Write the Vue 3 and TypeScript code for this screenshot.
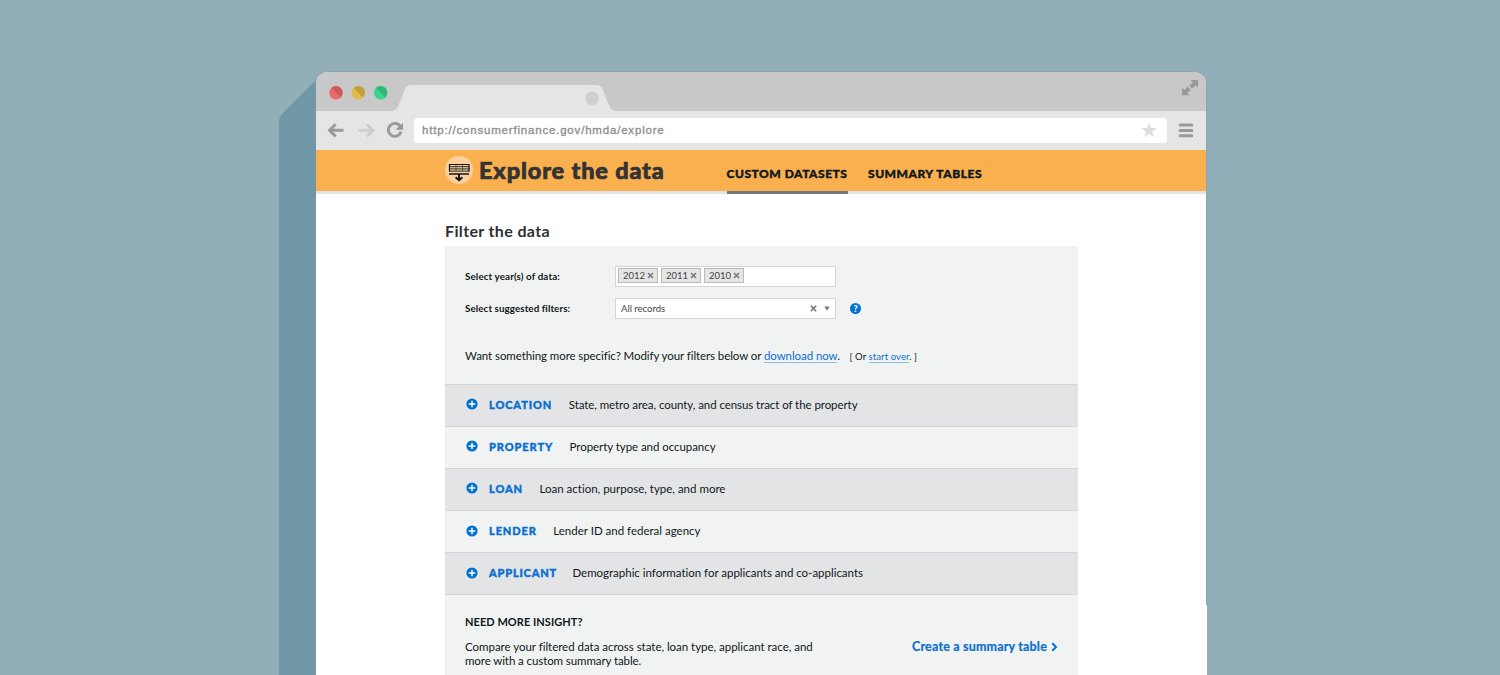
<script setup lang="ts">
interface FilterGroup {
  key: string
  name: string
  description: string
}

const years: number[] = [2012, 2011, 2010]

const groups: FilterGroup[] = [
  { key: 'location', name: 'LOCATION', description: 'State, metro area, county, and census tract of the property' },
  { key: 'property', name: 'PROPERTY', description: 'Property type and occupancy' },
  { key: 'loan', name: 'LOAN', description: 'Loan action, purpose, type, and more' },
  { key: 'lender', name: 'LENDER', description: 'Lender ID and federal agency' },
  { key: 'applicant', name: 'APPLICANT', description: 'Demographic information for applicants and co-applicants' },
]
</script>

<template>
  <main class="stage">
    <svg class="side" width="38" height="603" viewBox="0 0 38 603">
      <path d="M38 7 L3 42 Q0 45 0 50 V603 H38 Z" fill="#7097a5" />
    </svg>
    <div class="window">
      <div class="tabstrip">
        <svg width="890" height="39" viewBox="0 0 890 39">
          <path d="M76 39 C80 38 81.500 36 83 32 L89 17 C90.500 13.500 92 13 96 13 H280 C283.500 13 285 14 286.500 17 L292.500 32 C294 36 295.500 38 299 39 Z" fill="#e5e5e5" />
          <circle cx="20" cy="20.700" r="6.700" fill="#e96a68" />
          <path d="M15.260 15.960 A6.700 6.700 0 0 1 24.740 25.440 Z" fill="#ca5c5b" />
          <circle cx="42.300" cy="20.700" r="6.700" fill="#e0ba45" />
          <path d="M37.560 15.960 A6.700 6.700 0 0 1 47.040 25.440 Z" fill="#c1a13d" />
          <circle cx="64.600" cy="20.700" r="6.700" fill="#36d68b" />
          <path d="M59.860 15.960 A6.700 6.700 0 0 1 69.340 25.440 Z" fill="#30b878" />
          <circle cx="276" cy="26.300" r="6.700" fill="#cfcfcf" />
          <g fill="#999">
            <path d="M874.500 8 H882 V15.500 L879.700 13.200 L876.200 16.700 L873.200 13.700 L876.800 10.200 Z" />
            <path d="M866 15.700 L868.400 18 L871.700 14.600 L874.800 17.700 L871.300 21 L873.700 23.200 H866 Z" />
          </g>
        </svg>
      </div>
      <div class="toolbar">
        <svg class="nav" width="98" height="39" viewBox="0 0 98 39" fill="none">
          <path d="M27.500 19.300 H14 M19.700 13.200 L13.500 19.300 L19.700 25.400" stroke="#999" stroke-width="2.900" />
          <path d="M42.500 19.300 H56 M50.800 13.200 L57 19.300 L50.800 25.400" stroke="#cdcdcd" stroke-width="2.900" />
          <path d="M84.300 15.300 A6.500 6.500 0 1 0 85.100 20.700" stroke="#999" stroke-width="2.900" />
          <path d="M87 11.700 V18.800 H79.500 Z" fill="#999" />
        </svg>
        <div class="address">
          <span class="url">http://consumerfinance.gov/hmda/explore</span>
          <svg width="18" height="18" viewBox="0 0 18 18">
            <path d="M9 1.200 L10.900 6.900 H17 L12.100 10.500 L13.900 16.300 L9 12.800 L4.100 16.300 L5.900 10.500 L1 6.900 H7.100 Z" fill="#dedede" />
          </svg>
        </div>
        <svg class="burger" width="16" height="16" viewBox="0 0 16 16">
          <path d="M2.200 2 H13.800 M2.200 7.400 H13.800 M2.200 12.700 H13.800" stroke="#999" stroke-width="3" stroke-linecap="round" />
        </svg>
      </div>

      <header class="banner">
        <svg class="logo" width="28" height="28" viewBox="0 0 28 28">
          <circle cx="14" cy="14" r="14" fill="#fdcf9b" />
          <path d="M4 8.500 H24.500 M4.500 8 V15.500 M24 8 V15.500" stroke="#101820" stroke-width="1.200" fill="none" />
          <path d="M4 10.700 H24.500 M4 12.900 H24.500 M4 15.100 H24.500" stroke="#101820" stroke-width=".9" />
          <path d="M11 8 V15 M17.500 8 V15" stroke="#101820" stroke-width=".5" />
          <path d="M4 18 H24" stroke="#101820" stroke-width="1.500" />
          <path d="M14 18 V24 M10.600 21.200 L14 24.200 L17.400 21.200" stroke="#101820" stroke-width="2" fill="none" />
        </svg>
        <h1 class="title">Explore the data</h1>
        <nav class="menu">
          <a class="tab active">CUSTOM DATASETS</a>
          <a class="tab second">SUMMARY TABLES</a>
        </nav>
      </header>

      <section class="content">
        <h2 class="heading">Filter the data</h2>
        <div class="panel">
          <div class="form">
            <div class="field">
              <span class="label years">Select year(s) of data:</span>
              <div class="input chips">
                <span v-for="year in years" :key="year" class="chip">
                  {{ year }}
                  <svg width="7" height="7" viewBox="0 0 7 7"><path d="M1 1 L6 6 M6 1 L1 6" stroke="#7b7b7b" stroke-width="1.700" /></svg>
                </span>
              </div>
            </div>
            <div class="field">
              <span class="label suggested">Select suggested filters:</span>
              <div class="input select">
                <span class="value">All records</span>
                <svg width="7" height="7" viewBox="0 0 7 7"><path d="M.8 .8 L6.200 6.200 M6.200 .8 L.8 6.200" stroke="#777" stroke-width="1.600" /></svg>
                <svg class="caret" width="6" height="5" viewBox="0 0 6 5"><path d="M.3 .5 H5.700 L3 4.700 Z" fill="#777" /></svg>
              </div>
              <span class="help">?</span>
            </div>
            <p class="more">
              <span class="lead">Want something more specific? Modify your filters below or <a class="link">download now</a>.</span>
              <span class="or">[ Or <a class="link">start over</a>. ]</span>
            </p>
          </div>

          <div v-for="group in groups" :key="group.key" class="group">
            <svg class="plus" width="12" height="12" viewBox="0 0 12 12">
              <circle cx="6" cy="6" r="5.600" fill="#0071ce" />
              <path d="M6 2.700 V9.300 M2.700 6 H9.300" stroke="#fff" stroke-width="1.500" />
            </svg>
            <span class="name" :class="group.key">{{ group.name }}</span>
            <span class="desc" :class="group.key">{{ group.description }}</span>
          </div>

          <div class="insight">
            <div class="pitch">
              <h3>NEED MORE INSIGHT?</h3>
              <p class="first">Compare your filtered data across state, loan type, applicant race, and</p>
              <p class="last">more with a custom summary table.</p>
            </div>
            <a class="create">
              <span>Create a summary table</span>
              <svg width="7" height="10" viewBox="0 0 7 10"><path d="M1.300 1.200 L5 5 L1.300 8.800" stroke="#0a6fd0" stroke-width="2" fill="none" /></svg>
            </a>
          </div>
        </div>
      </section>
    </div>
    <div class="edge"></div>
  </main>
</template>

<style>
html,
body {
  margin: 0;
  overflow: hidden;
}
</style>

<style scoped>
.stage {
  width: 1500px;
  height: 675px;
  box-sizing: border-box;
  padding: 72px 0 0 278.500px;
  display: flex;
  overflow: hidden;
  background: #92afb9;
  font-family: Lato, 'Liberation Sans', sans-serif;
  font-variant-ligatures: none;
  color: #101820;
  white-space: nowrap;
}
.side {
  flex: none;
  margin-right: -0.500px;
}
.window {
  flex: none;
  width: 890px;
  height: 603px;
  border-radius: 12px 12px 0 0;
  background: #fff;
  overflow: hidden;
  box-shadow: 0 0 0 0.500px #7b9eaa;
}
.edge {
  width: 1px;
  height: 70px;
  margin-top: 533px;
  background: #fff;
  z-index: 1;
}
.tabstrip {
  height: 39px;
  background: #c8c8c8;
}
.tabstrip svg {
  display: block;
}
.toolbar {
  height: 39px;
  display: flex;
  align-items: center;
  background: #e5e5e5;
}
.nav {
  flex: none;
}
.address {
  width: 753px;
  height: 25px;
  box-sizing: border-box;
  padding: 0 9px 0 8px;
  display: flex;
  align-items: center;
  justify-content: space-between;
  border-radius: 4px;
  background: #fff;
}
.address svg {
  margin-bottom: 1px;
}
.url {
  font: 11.500px/25px 'Liberation Sans', sans-serif;
  color: #909090;
  -webkit-text-stroke: 0.350px #909090;
  letter-spacing: 0.810px;
}
.burger {
  margin-left: 11px;
}
.banner {
  height: 44px;
  box-sizing: border-box;
  border-bottom: 3px solid #e4e4e4;
  padding-left: 129px;
  display: flex;
  background: #fbb050;
  background-clip: padding-box;
}
.logo {
  flex: none;
  margin-top: 6px;
}
.title {
  width: 247.500px;
  margin: 0 0 0 6px;
  font-size: 23.500px;
  line-height: 41px;
  font-weight: 900;
  letter-spacing: 0.840px;
  color: #333;
  -webkit-text-stroke: 0.700px #333;
}
.menu {
  display: flex;
  gap: 20px;
  height: 44px;
  font-size: 12px;
  font-weight: 900;
  letter-spacing: 0.530px;
  -webkit-text-stroke: 0.400px #101820;
}
.tab {
  width: 121px;
  height: 44px;
  box-sizing: border-box;
  line-height: 47px;
}
.second {
  margin-left: 0.500px;
}
.active {
  border-bottom: 3px solid #75787b;
}
.content {
  width: 633px;
  margin: 27px 0 0 129px;
}
.heading {
  margin: 0;
  height: 25px;
  font-size: 16px;
  line-height: 20px;
  font-weight: 700;
  letter-spacing: 0.360px;
  color: #2c3134;
}
.panel {
  background: #f1f3f2;
}
.form {
  height: 137.500px;
  box-sizing: border-box;
  padding: 19.500px 20px 0;
}
.field {
  height: 21px;
  margin-bottom: 11px;
  display: flex;
  align-items: center;
}
.label {
  width: 150px;
  font-size: 9.800px;
  font-weight: 700;
  letter-spacing: 0.080px;
}
.years {
  letter-spacing: 0.120px;
}
.input {
  width: 221px;
  height: 21px;
  box-sizing: border-box;
  border: 1px solid #d4d5d6;
  background: #fff;
  display: flex;
  align-items: center;
}
.chips {
  gap: 3px;
  padding: 0 0 1px 2.400px;
}
.chip {
  width: 40px;
  height: 15px;
  box-sizing: border-box;
  padding: 0 3px 0 3.500px;
  border: 1px solid #b9babb;
  background: #e5e5e5;
  display: flex;
  align-items: center;
  justify-content: space-between;
  font-size: 9.500px;
  line-height: 13px;
  color: #444;
}
.select {
  padding: 0 5px;
}
.value {
  flex: 1;
  font-size: 9.500px;
  color: #444;
}
.caret {
  margin: 0 0 0 7px;
}
.help {
  width: 11px;
  height: 11px;
  margin-left: 14px;
  border-radius: 50%;
  background: #0071ce;
  color: #fff;
  font-size: 9px;
  line-height: 11px;
  font-weight: 900;
  text-align: center;
}
.more {
  margin: 27px 0 0;
  display: flex;
  align-items: baseline;
  line-height: 20px;
}
.lead {
  width: 384.500px;
  font-size: 11.500px;
  letter-spacing: -0.080px;
}
.or {
  font-size: 9.500px;
  letter-spacing: 0.100px;
}
.link {
  color: #0a6fd0;
  border-bottom: 1px solid #8dbbe5;
}
.group {
  height: 42.200px;
  box-sizing: border-box;
  border-top: 1px solid #d3d6d6;
  padding: 0 0 2px 20.500px;
  display: flex;
  align-items: center;
  background: #f1f3f2;
}
.group:nth-child(even) {
  background: #e3e4e6;
}
.name {
  margin: 0 16.500px 0 11.500px;
  font-size: 11px;
  font-weight: 900;
  color: #0a6fd0;
  letter-spacing: 0.900px;
  -webkit-text-stroke: 0.400px #0a6fd0;
}
.name.applicant {
  margin-right: 15.500px;
  letter-spacing: 0.800px;
}
.desc {
  font-size: 11.500px;
}
.desc.location {
  letter-spacing: -0.070px;
}
.desc.property {
  letter-spacing: -0.060px;
}
.desc.applicant {
  letter-spacing: -0.015px;
}
.insight {
  height: 90px;
  border-top: 1px solid #d3d6d6;
  padding: 20px 20px 0;
  display: flex;
  justify-content: space-between;
}
h3 {
  margin: 0 0 11px;
  font-size: 11px;
  line-height: 14px;
  font-weight: 700;
  letter-spacing: 0.050px;
}
.pitch p {
  margin: 0;
  font-size: 11.500px;
  line-height: 13.700px;
  letter-spacing: -0.025px;
}
.pitch .last {
  letter-spacing: -0.090px;
}
.create {
  height: 14px;
  margin-top: 25px;
  display: flex;
  align-items: center;
  gap: 4px;
  font-size: 12.500px;
  line-height: 14px;
  font-weight: 700;
  letter-spacing: 0.180px;
  color: #0a6fd0;
  -webkit-text-stroke: 0.200px #0a6fd0;
}
</style>
